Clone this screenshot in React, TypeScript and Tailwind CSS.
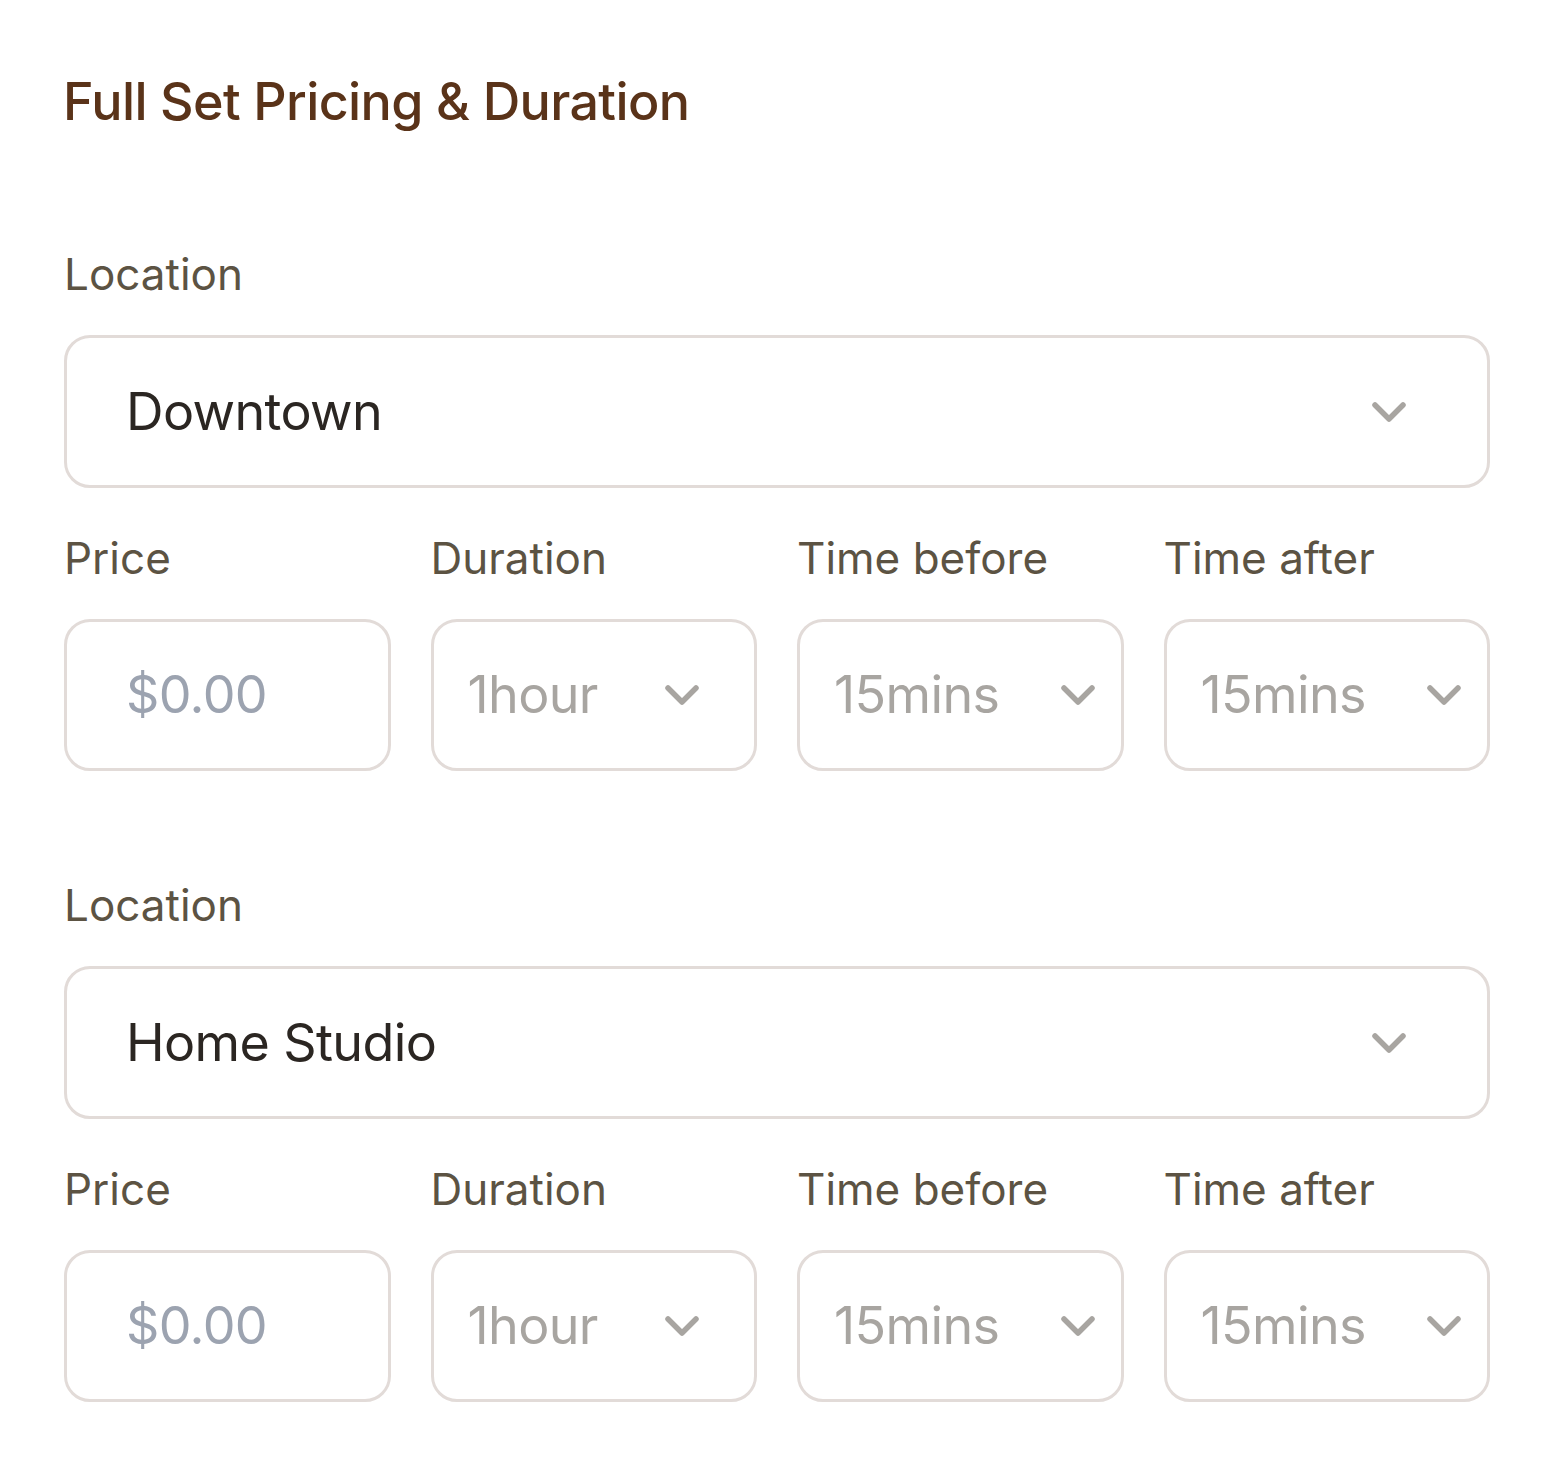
import { ReactNode } from 'react';

function Chevron({ className = '' }: { className?: string }) {
  return (
    <svg
      viewBox="0 0 36 22"
      width={36}
      height={22}
      fill="none"
      className={className}
      aria-hidden="true"
    >
      <path
        d="M4 4l14 14 14-14"
        stroke="#a8a5a1"
        strokeWidth={5.5}
        strokeLinecap="round"
        strokeLinejoin="round"
      />
    </svg>
  );
}

function Label({ children }: { children: ReactNode }) {
  return (
    <div className="mb-[39px] text-[44px] leading-[44px] text-[#5c5343] whitespace-nowrap">
      {children}
    </div>
  );
}

function SmallSelect({
  label,
  value,
  wide = false,
}: {
  label: string;
  value: string;
  wide?: boolean;
}) {
  return (
    <div>
      <Label>{label}</Label>
      <div
        className={
          wide
            ? 'flex h-[152px] items-center justify-between rounded-[26px] border-[3px] border-[#e2dbd8] pl-[34px] pr-[54px]'
            : 'flex h-[152px] items-center justify-between rounded-[26px] border-[3px] border-[#e2dbd8] pl-[34px] pr-[25px]'
        }
      >
        <span className="text-[52px] leading-none tracking-[-0.012em] text-[#a8a5a1]">
          {value}
        </span>
        <Chevron />
      </div>
    </div>
  );
}

function Block({ location }: { location: string }) {
  return (
    <div>
      <Label>Location</Label>
      <div className="flex h-[153px] items-center justify-between rounded-[26px] border-[3px] border-[#e2dbd8] pl-[59px] pr-[80px]">
        <span className="text-[52px] leading-none tracking-[-0.012em] text-[#2b2622]">
          {location}
        </span>
        <Chevron />
      </div>

      <div className="mt-[48px] grid grid-cols-4 gap-x-[40px]">
        <div>
          <Label>Price</Label>
          <div className="flex h-[152px] items-center rounded-[26px] border-[3px] border-[#e2dbd8] pl-[59px]">
            <span className="text-[52px] leading-none tracking-[-0.012em] text-[#9ca3b0]">
              $0.00
            </span>
          </div>
        </div>
        <SmallSelect label="Duration" value="1hour" wide />
        <SmallSelect label="Time before" value="15mins" />
        <SmallSelect label="Time after" value="15mins" />
      </div>
    </div>
  );
}

export default function App() {
  return (
    <div
      className="min-h-[1466px] bg-white px-[64px] pt-[76px]"
      style={{ fontFamily: 'Inter, "Noto Sans", sans-serif' }}
    >
      <h2 className="-ml-[1px] text-[52px] font-medium leading-[52px] tracking-[-0.012em] text-[#5a3319] whitespace-nowrap">
        Full Set Pricing &amp; Duration
      </h2>
      <div className="mt-[124px]">
        <Block location="Downtown" />
      </div>
      <div className="mt-[112px]">
        <Block location="Home Studio" />
      </div>
    </div>
  );
}
